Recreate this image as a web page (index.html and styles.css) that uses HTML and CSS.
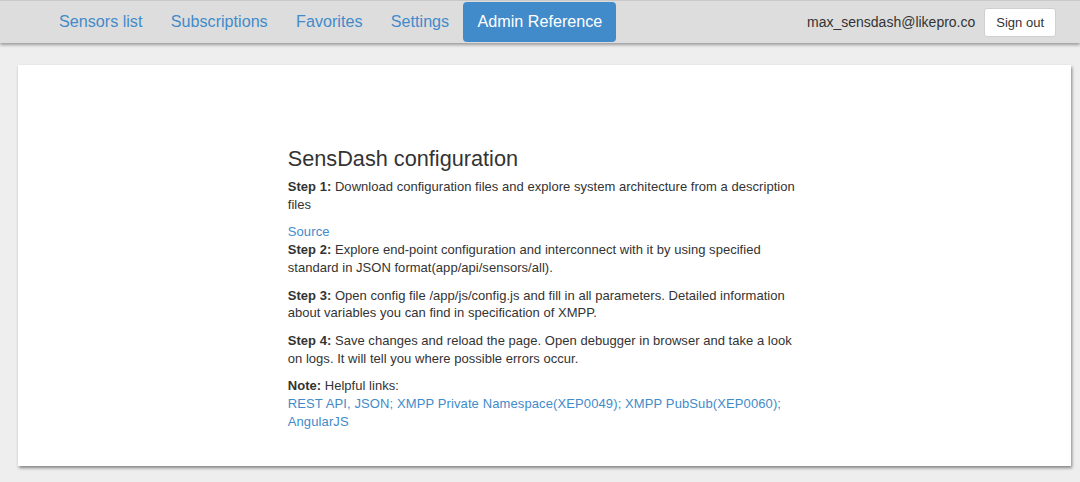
FILE: index.html
```html
<!DOCTYPE html>
<html>
<head>
<meta charset="utf-8">
<link rel="stylesheet" href="styles.css">
</head>
<body>
<header class="navbar">
  <nav class="nav">
    <a class="nav-link" href="#">Sensors list</a>
    <a class="nav-link" href="#">Subscriptions</a>
    <a class="nav-link" href="#">Favorites</a>
    <a class="nav-link" href="#">Settings</a>
    <a class="nav-link active" href="#">Admin Reference</a>
  </nav>
  <div class="user">
    <span class="email">max_sensdash@likepro.co</span>
    <button class="btn">Sign out</button>
  </div>
</header>
<main class="page">
  <section class="card">
    <div class="col">
      <h3 class="title">SensDash configuration</h3>
      <p><b>Step 1:</b> Download configuration files and explore system architecture from a description files</p>
      <a class="link block" href="#">Source</a>
      <p><b>Step 2:</b> Explore end-point configuration and interconnect with it by using specified standard in JSON format(app/api/sensors/all).</p>
      <p><b>Step 3:</b> Open config file /app/js/config.js and fill in all parameters. Detailed information about variables you can find in specification of XMPP.</p>
      <p><b>Step 4:</b> Save changes and reload the page. Open debugger in browser and take a look on logs. It will tell you where possible errors occur.</p>
      <p><b>Note:</b> Helpful links:<br>
        <a class="link" href="#">REST API</a><span class="link">, </span><a class="link" href="#">JSON</a><span class="link">; </span><a class="link" href="#">XMPP Private Namespace(XEP0049)</a><span class="link">; </span><a class="link" href="#">XMPP PubSub(XEP0060)</a><span class="link">; </span><a class="link" href="#">AngularJS</a></p>
    </div>
  </section>
</main>
</body>
</html>
```
FILE: styles.css
```css
* { box-sizing: border-box; }
html, body { margin: 0; padding: 0; }
body {
  background: #eeeeee;
  font-family: "Liberation Sans", Arial, sans-serif;
  color: #333333;
  font-size: 13px;
  height: 482px;
  overflow: hidden;
}
.navbar {
  height: 43px;
  background: #dddddd;
  border-top: 1px solid #c9c9c9;
  box-shadow: 0 2px 3px rgba(0,0,0,0.35);
  display: flex;
  align-items: stretch;
  justify-content: space-between;
  padding: 0 24px 0 44.8px;
  position: relative;
  z-index: 2;
}
.nav {
  display: flex;
  align-items: stretch;
  padding-top: 1px;
  padding-bottom: 1px;
}
.nav-link {
  display: flex;
  align-items: center;
  padding: 0 14.2px 1px;
  font-size: 16.15px;
  color: #428bca;
  text-decoration: none;
  border-radius: 4px;
}
.nav-link.active {
  background: #428bca;
  color: #ffffff;
}
.user {
  display: flex;
  align-items: center;
  gap: 9px;
}
.email {
  font-size: 14px;
  color: #333333;
}
.btn {
  font-family: "Liberation Sans", Arial, sans-serif;
  font-size: 13px;
  color: #333333;
  background: #ffffff;
  border: 1px solid #d0d0d0;
  border-radius: 3px;
  height: 29px;
  padding: 0 11px;
  margin-top: 1px;
}
.page {
  padding: 22px 9px 0 18px;
}
.card {
  background: #ffffff;
  height: 401px;
  box-shadow: 1px 2px 3px rgba(0,0,0,0.45);
  padding: 82px 15px 0;
}
.col {
  width: 50%;
  margin-left: calc(25% - 1px);
}
.title {
  font-size: 21.7px;
  font-weight: 400;
  line-height: 24px;
  margin: 0 0 7px;
  color: #333333;
}
p {
  margin: 0 0 10px;
  line-height: 17.7px;
  letter-spacing: 0.03px;
}
.link {
  color: #428bca;
  text-decoration: none;
  letter-spacing: 0.11px;
}
.block {
  display: block;
  line-height: 17.7px;
}
```
